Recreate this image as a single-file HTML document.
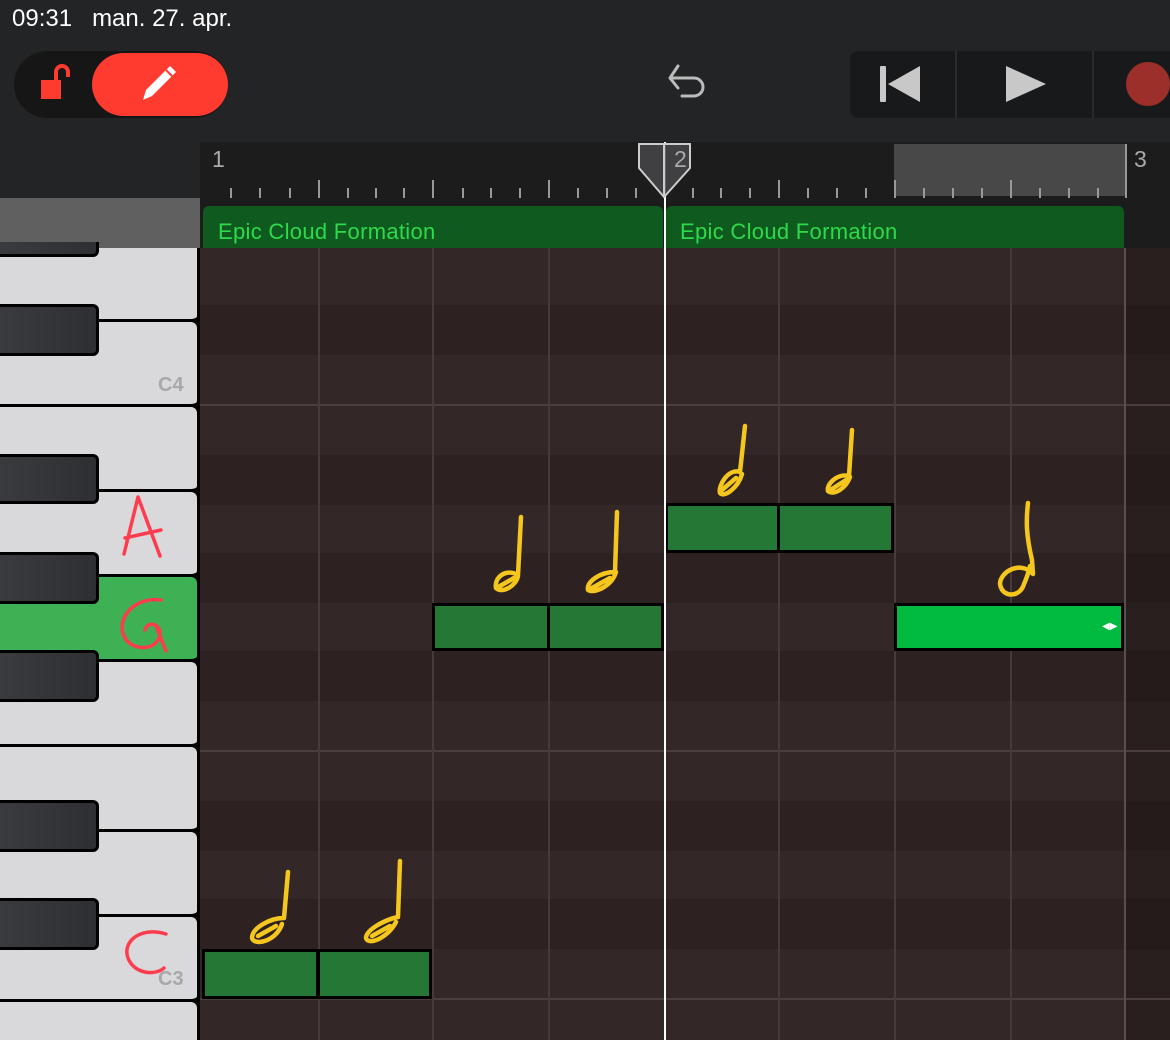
<!DOCTYPE html>
<html><head><meta charset="utf-8"><style>
*{margin:0;padding:0;box-sizing:border-box}
html,body{width:1170px;height:1040px;overflow:hidden}
body{background:#232425;font-family:"Liberation Sans",sans-serif;position:relative}
.a{position:absolute}
.wk{position:absolute;left:0;width:197px;background:#d9d9db;border-radius:0 6px 6px 0;border-bottom:3px solid #000}
.bk{position:absolute;left:0;width:99px;background:linear-gradient(90deg,#3a3b3e,#2e2f32);border:3px solid #000;border-left:none;border-radius:0 6px 6px 0}
.row{position:absolute;left:200px;width:970px;height:50px}
.n{position:absolute;background:#247734;border:3px solid #000}
.vl{position:absolute;top:248px;bottom:0;width:2px;background:#473a3b}
</style></head><body>
<div class="a" style="left:12px;top:5px;color:#fff;font-size:24px">09:31&nbsp;&nbsp;&nbsp;man. 27. apr.</div>
<!-- left toggle -->
<div class="a" style="left:14px;top:51px;width:214px;height:67px;border-radius:34px;background:#161617"></div>
<div class="a" style="left:92px;top:53px;width:136px;height:63px;border-radius:32px;background:#ff3b30"></div>
<svg class="a" style="left:38px;top:62px" width="40" height="42"><rect x="3" y="18" width="20" height="19" fill="#ff3b30"/><path d="M18 18 V10 a6 6 0 0 1 12 0 V15" stroke="#ff3b30" stroke-width="4" fill="none"/></svg>
<svg class="a" style="left:138px;top:62px" width="44" height="44"><path d="M5 38 L8 28 L32 4 L38 10 L14 34 Z" fill="#fff"/><path d="M28 8 L34 14" stroke="#ff3b30" stroke-width="2"/></svg>
<!-- undo -->
<svg class="a" style="left:664px;top:62px" width="52" height="44"><path d="M14 4 L6 16 L14 26 M6 16 H30 a9 9 0 0 1 0 18 H18" stroke="#bbb" stroke-width="3" fill="none" stroke-linecap="round" stroke-linejoin="round"/></svg>
<!-- transport -->
<div class="a" style="left:850px;top:51px;width:320px;height:67px;border-radius:8px 0 0 8px;background:#18191a"></div>
<div class="a" style="left:955px;top:51px;width:2px;height:67px;background:#2a2a2b"></div>
<div class="a" style="left:1092px;top:51px;width:2px;height:67px;background:#2a2a2b"></div>
<svg class="a" style="left:878px;top:64px" width="46" height="40"><rect x="2" y="2" width="6" height="36" rx="1" fill="#c8c8c8"/><path d="M42 2 V38 L10 20 Z" fill="#c8c8c8"/></svg>
<svg class="a" style="left:1004px;top:64px" width="44" height="40"><path d="M2 2 V38 L42 20 Z" fill="#c8c8c8"/></svg>
<div class="a" style="left:1126px;top:62px;width:44px;height:44px;border-radius:50%;background:#9d2f2a"></div>
<!-- ruler -->
<div class="a" style="left:200px;top:142px;width:970px;height:56px;background:#1c1c1d"></div>
<div class="a" style="left:894px;top:144px;width:232px;height:52px;background:#484848"></div>
<div class="a" style="left:1125px;top:144px;width:2px;height:54px;background:#999"></div>
<svg class="a" style="left:0;top:175px" width="1170" height="23">
<g stroke="#999" stroke-width="2">
<path d="M231 13V23M260 13V23M290 13V23M348 13V23M376 13V23M404 13V23M463 13V23M491 13V23M520 13V23M578 13V23M607 13V23M636 13V23M693 13V23M721 13V23M750 13V23M808 13V23M837 13V23M866 13V23M924 13V23M953 13V23M982 13V23M1040 13V23M1069 13V23M1098 13V23"/>
<path d="M319 5V23M433 5V23M549 5V23M779 5V23M895 5V23M1011 5V23"/></g></svg>
<!-- region bar -->
<div class="a" style="left:0;top:198px;width:200px;height:50px;background:#606060"></div>
<div class="a" style="left:200px;top:198px;width:970px;height:50px;background:#1c1c1d"></div>
<div class="a" style="left:203px;top:206px;width:460px;height:42px;background:#0f5a1f;border-radius:6px 6px 0 0"></div>
<div class="a" style="left:666px;top:206px;width:458px;height:42px;background:#0f5a1f;border-radius:6px 6px 0 0"></div>
<div class="a" style="left:218px;top:219px;color:#2fd94c;font-size:22px;letter-spacing:.3px">Epic Cloud Formation</div>
<div class="a" style="left:680px;top:219px;color:#2fd94c;font-size:22px;letter-spacing:.3px">Epic Cloud Formation</div>
<!-- grid rows -->
<div class="a" style="left:200px;top:248px;width:970px;height:792px;background:#332727"></div>
<div class="row" style="top:305px;background:#2e2122"></div>
<div class="row" style="top:455px;background:#2e2122"></div>
<div class="row" style="top:553px;background:#2e2122"></div>
<div class="row" style="top:651px;background:#2e2122"></div>
<div class="row" style="top:801px;background:#2e2122"></div>
<div class="row" style="top:899px;background:#2e2122"></div>
<div class="a" style="left:1126px;top:248px;width:44px;height:792px;background:rgba(0,0,0,.18)"></div>
<div class="a" style="left:200px;top:404px;width:970px;height:2px;background:#4a3e3f"></div>
<div class="a" style="left:200px;top:750px;width:970px;height:2px;background:#4a3e3f"></div>
<div class="a" style="left:200px;top:998px;width:970px;height:2px;background:#4a3e3f"></div>
<div class="vl" style="left:318px"></div><div class="vl" style="left:432px"></div><div class="vl" style="left:548px"></div>
<div class="vl" style="left:778px"></div><div class="vl" style="left:894px"></div><div class="vl" style="left:1010px"></div><div class="vl" style="left:1124px;background:#5a4e4f"></div>
<!-- notes -->
<div class="n" style="left:202px;top:949px;width:117px;height:50px"></div>
<div class="n" style="left:317px;top:949px;width:115px;height:50px"></div>
<div class="n" style="left:432px;top:603px;width:118px;height:48px"></div>
<div class="n" style="left:547px;top:603px;width:117px;height:48px"></div>
<div class="n" style="left:665px;top:503px;width:115px;height:50px"></div>
<div class="n" style="left:777px;top:503px;width:117px;height:50px"></div>
<div class="n" style="left:894px;top:603px;width:230px;height:48px;background:#00bb40"></div>
<div class="a" style="left:1102px;top:621px;color:#fff;font-size:10px">◀▶</div>
<!-- playhead -->
<div class="a" style="left:664px;top:142px;width:2px;height:898px;background:#fff"></div>
<svg class="a" style="left:637px;top:143px" width="56" height="56"><path d="M2 1 H53 V25 L27 54 L2 25 Z" fill="rgba(70,70,74,.85)" stroke="#ccc" stroke-width="2"/><path d="M27 1V54" stroke="#ccc" stroke-width="2"/></svg>
<div class="a" style="left:212px;top:146px;color:#aaa;font-size:23px">1</div>
<div class="a" style="left:674px;top:146px;color:#aaa;font-size:23px">2</div>
<div class="a" style="left:1134px;top:146px;color:#aaa;font-size:23px">3</div>
<!-- keyboard -->
<div class="a" style="left:0;top:248px;width:200px;height:792px;background:#000"></div>
<div class="wk" style="top:240px;height:82px"></div>
<div class="wk" style="top:322px;height:85px"></div>
<div class="wk" style="top:407px;height:85px"></div>
<div class="wk" style="top:492px;height:85px"></div>
<div class="wk" style="top:577px;height:85px;background:#3db154"></div>
<div class="wk" style="top:662px;height:85px"></div>
<div class="wk" style="top:747px;height:85px"></div>
<div class="wk" style="top:832px;height:85px"></div>
<div class="wk" style="top:917px;height:85px"></div>
<div class="wk" style="top:1002px;height:60px"></div>
<div class="a" style="left:0;top:198px;width:200px;height:50px;background:#606060"></div>
<div class="bk" style="top:236px;height:21px;border-top:none"></div>
<div class="a" style="left:0;top:198px;width:200px;height:44px;background:#606060"></div>
<div class="bk" style="top:304px;height:52px"></div>
<div class="bk" style="top:454px;height:50px"></div>
<div class="bk" style="top:552px;height:52px"></div>
<div class="bk" style="top:650px;height:52px"></div>
<div class="bk" style="top:800px;height:52px"></div>
<div class="bk" style="top:898px;height:52px"></div>
<div class="a" style="left:158px;top:374px;color:#a8a8a8;font-size:20px;font-weight:bold">C4</div>
<div class="a" style="left:158px;top:968px;color:#a8a8a8;font-size:20px;font-weight:bold">C3</div>
<!-- handwriting -->
<svg class="a" style="left:0;top:0" width="1170" height="1040" fill="none" stroke-linecap="round" stroke-linejoin="round">
<g stroke="#ff3b4e" stroke-width="3.5">
<path d="M124 554 L138 497 L160 556 M125 538 L161 530"/>
<path d="M161 600 C130 596 112 625 128 642 C140 652 160 648 160 632 C158 622 147 622 145 630 M156 626 L166 651"/>
<path d="M166 934 C140 926 122 942 128 958 C134 974 155 976 164 968"/>
</g>
<g stroke="#f5c61d" stroke-width="4.5">
<path d="M288 872 L284 918 C270 918 252 928 252 938 C254 946 276 942 282 924 M258 936 L276 926"/>
<path d="M400 861 L398 917 C384 920 366 930 366 938 C368 946 388 938 396 922 M372 936 L390 926"/>
<path d="M521 517 L518 575 C505 568 494 578 496 588 C502 594 516 586 518 576 M500 586 L514 578"/>
<path d="M617 512 L615 572 C600 572 586 582 588 590 C594 594 612 586 616 572 M592 588 L610 578"/>
<path d="M745 426 L740 472 C728 468 718 486 720 493 C724 498 738 488 742 474 M722 490 L736 478"/>
<path d="M852 430 L849 476 C838 473 826 484 828 491 C834 496 846 488 850 477 M832 489 L846 480"/>
<path d="M1028 503 C1026 520 1026 535 1032 560 L1033 574 C1020 560 1000 572 1000 584 C1002 598 1020 598 1024 584 C1028 575 1030 566 1030 566"/>
</g></svg>
</body></html>
